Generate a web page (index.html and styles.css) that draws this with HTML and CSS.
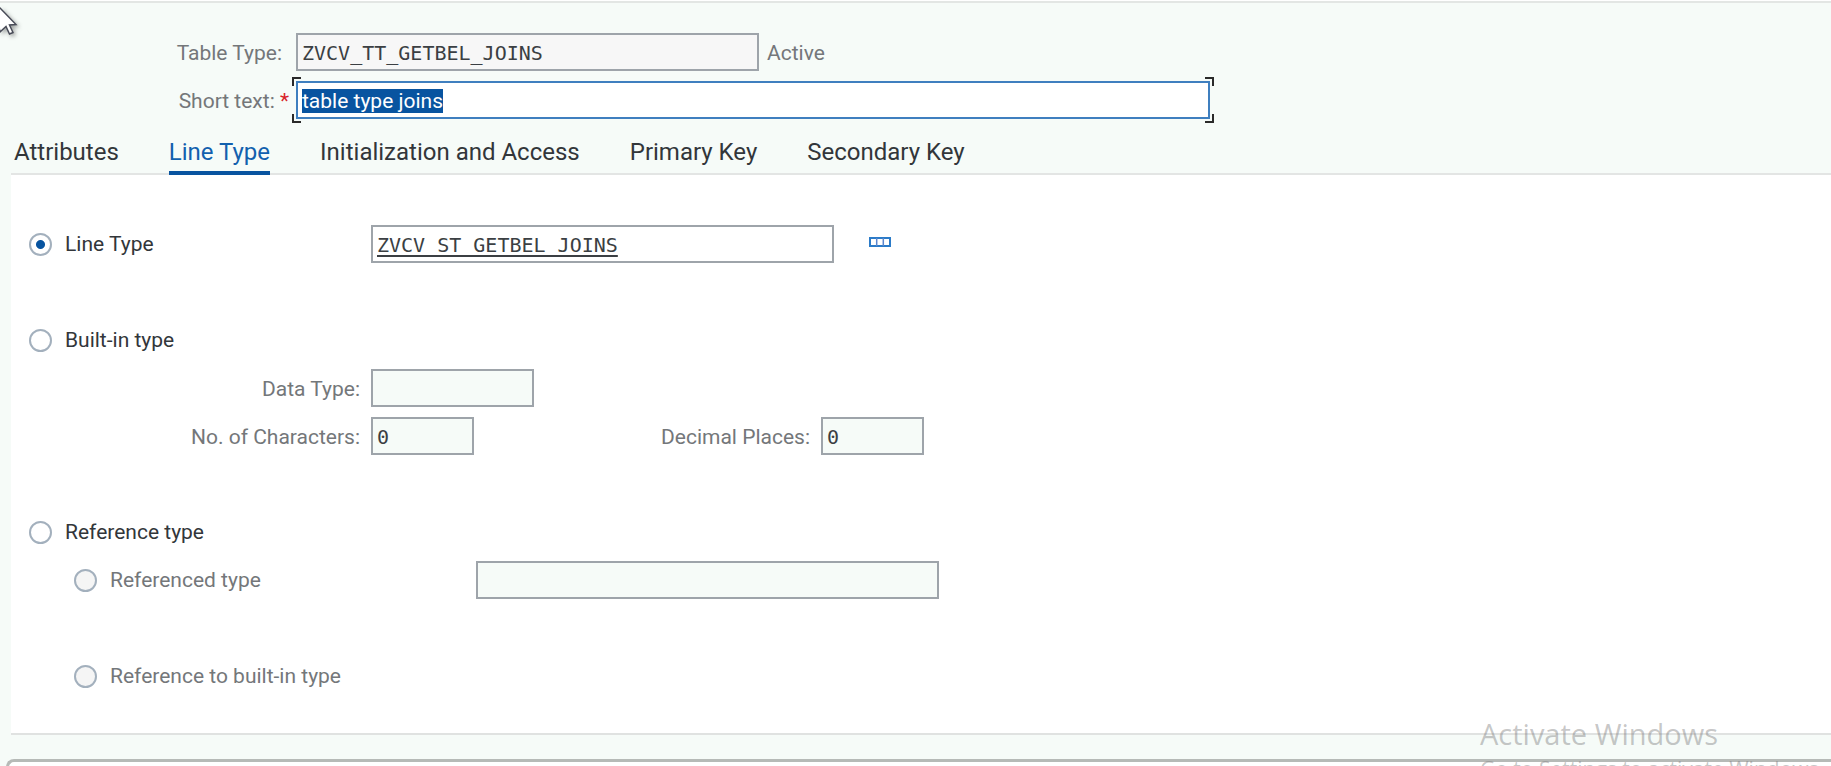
FILE: index.html
```html
<!DOCTYPE html>
<html lang="en">
<head>
<meta charset="utf-8">
<title>Table Type</title>
<link rel="stylesheet" href="styles.css">
</head>
<body>
<main class="page">
  <form class="header">
    <div class="header-row">
      <label class="label header-label" for="table-type">Table Type:</label>
      <input class="field field-long field-readonly" id="table-type" type="text" value="ZVCV_TT_GETBEL_JOINS" readonly>
      <span class="status">Active</span>
    </div>
    <div class="header-row">
      <label class="label header-label" for="short-text">Short text: <span class="required">*</span></label>
      <div class="focus-frame">
        <input class="field field-focus" id="short-text" type="text" value="table type joins" required>
        <i class="corner corner-tl"></i><i class="corner corner-tr"></i><i class="corner corner-bl"></i><i class="corner corner-br"></i>
      </div>
    </div>
  </form>
  <nav class="tabs">
    <button class="tab" type="button">Attributes</button>
    <button class="tab tab-active" type="button">Line Type</button>
    <button class="tab" type="button">Initialization and Access</button>
    <button class="tab" type="button">Primary Key</button>
    <button class="tab" type="button">Secondary Key</button>
  </nav>
  <form class="panel">
    <div class="row">
      <label class="choice choice-main"><input class="radio" type="radio" name="kind" checked>Line Type</label>
      <input class="field field-long field-link" type="text" aria-label="Line type name" value="ZVCV_ST_GETBEL_JOINS">
      <button class="icon-button" type="button" aria-label="Structure">
        <svg width="22" height="10" viewBox="0 0 22 10" fill="none" stroke="#2b7bc8" stroke-width="2"><path d="M1 1h20v8H1z"/><path stroke-width="1.5" stroke="#5a86cf" d="M7.7 1v8M14.3 1v8"/></svg>
      </button>
    </div>
    <div class="row row-spaced">
      <label class="choice"><input class="radio" type="radio" name="kind">Built-in type</label>
    </div>
    <div class="row">
      <label class="label detail-label" for="data-type">Data Type:</label>
      <input class="field field-medium field-off" id="data-type" type="text" readonly>
    </div>
    <div class="row">
      <label class="label detail-label" for="chars">No. of Characters:</label>
      <input class="field field-short field-off" id="chars" type="text" value="0" readonly>
      <label class="label decimal-label" for="decimals">Decimal Places:</label>
      <input class="field field-short field-off" id="decimals" type="text" value="0" readonly>
    </div>
    <div class="row row-spaced">
      <label class="choice"><input class="radio" type="radio" name="kind">Reference type</label>
    </div>
    <div class="row row-nested">
      <label class="choice choice-nested"><input class="radio radio-off" type="radio" name="ref" disabled>Referenced type</label>
      <input class="field field-long field-off" type="text" aria-label="Referenced type name" readonly>
    </div>
    <div class="row row-nested row-spaced">
      <label class="choice choice-nested"><input class="radio radio-off" type="radio" name="ref" disabled>Reference to built-in type</label>
    </div>
  </form>
  <section class="message-bar"></section>
  <aside class="watermark">
    <div class="watermark-title">Activate Windows</div>
    <div class="watermark-text">Go to Settings to activate Windows.</div>
  </aside>
  <svg class="cursor" width="24" height="32" viewBox="0 0 24 32"><path d="M-5 1L0 1L16 17.500L9.500 18L13 25.500L9.500 27L6 19.500L0 25z" fill="#fff" stroke="#484b57" stroke-width="1.500"/></svg>
</main>
<script src="script.js"></script>
</body>
</html>
```
FILE: styles.css
```css
* { box-sizing: border-box; }

body {
  margin: 0;
  background: #f6fbf8;
  color: #32363a;
  font-family: Roboto, Inter, sans-serif;
  font-size: 21px;
}

.page {
  position: relative;
  display: flex;
  flex-direction: column;
  height: 100vh;
  overflow: hidden;
  border-top: 1px solid #fff;
}

.header {
  border-top: 2px solid #e3e6e4;
  padding-top: 25px;
}

.header-row,
.row {
  display: flex;
  align-items: center;
  height: 48px;
}

.label { padding-top: 2px; color: #74777a; text-align: right; white-space: nowrap; }
.header-label { width: 296px; padding-right: 14px; }
.header-label:has(.required) { padding-right: 7px; }
.required { color: #d8232a; }
.status { padding: 2px 0 0 8px; color: #74777a; }

.field {
  height: 38px;
  padding: 2px 4px 0;
  border: 2px solid #9ea4aa;
  border-radius: 0;
  outline: 0;
  background: #fff;
  color: #3b3f43;
  font-family: "DejaVu Sans Mono", monospace;
  font-size: 20px;
}

.field-long { width: 463px; }
.field-medium { width: 163px; }
.field-short { width: 103px; }
.field-readonly { background: #f7f7f7; }
.field-off { background: #f6fbf8; }
.field-link {
  text-decoration: underline;
  text-decoration-skip-ink: none;
  text-underline-offset: 3px;
}

.focus-frame { position: relative; width: 914px; }
.field-focus {
  display: block;
  width: 100%;
  border-color: #3f7fbf;
  font-family: inherit;
  font-size: 21px;
}
.field-focus::selection { background: #0854a0; color: #fff; }

.corner {
  position: absolute;
  width: 9px;
  height: 9px;
  border: 0 solid #2a2a2a;
}
.corner-tl { top: -4px; left: -4px; border-width: 2px 0 0 2px; }
.corner-tr { top: -4px; right: -4px; border-width: 2px 2px 0 0; }
.corner-bl { bottom: -4px; left: -4px; border-width: 0 0 2px 2px; }
.corner-br { bottom: -4px; right: -4px; border-width: 0 2px 2px 0; }

.tabs {
  display: flex;
  gap: 50px;
  height: 51px;
  margin-left: 11px;
  padding-left: 3px;
  border-bottom: 2px solid #e3e5e4;
}

.tab {
  height: 51px;
  padding: 8px 0 0;
  border: 0;
  border-bottom: 4px solid transparent;
  background: none;
  color: #32363a;
  font-family: inherit;
  font-size: 24px;
  white-space: nowrap;
}
.tab-active { border-color: #0854a0; color: #1260ae; }

.panel {
  margin-left: 11px;
  padding: 45px 0 33px 18px;
  border-bottom: 2px solid #e0e2e1;
  background: #fff;
}

.row-spaced { margin-top: 48px; }
.row-nested { padding-left: 45px; }

.choice {
  display: flex;
  align-items: center;
  gap: 13px;
  white-space: nowrap;
}
.choice-main { width: 342px; }
.choice-nested { width: 402px; color: #74777a; }

.radio {
  appearance: none;
  width: 23px;
  height: 23px;
  margin: 0;
  border: 2px solid #a3b0bd;
  border-radius: 50%;
  background: #fff;
}
.radio:checked { background: radial-gradient(circle, #0854a0 4px, #fff 5px); }
.radio-off { background: #f5f5f5; }

.icon-button {
  display: flex;
  margin-left: 35px;
  padding: 0 0 4px;
  border: 0;
  background: none;
}

.detail-label { width: 342px; padding-right: 11px; }
.decimal-label { width: 347px; padding-right: 11px; }

.message-bar {
  flex: 1 0 40px;
  margin: 24px 0 0 6px;
  border: 3px solid #b6bab7;
  border-width: 3px 0 0 3px;
  border-radius: 8px 0 0 0;
  background: #fff;
}

.watermark {
  position: absolute;
  top: 714px;
  left: 1480px;
  color: rgba(120, 120, 120, 0.42);
  font-family: "Open Sans", "Noto Sans", sans-serif;
  white-space: nowrap;
}
.watermark-title { font-size: 29px; line-height: 38px; }
.watermark-text { font-size: 21px; line-height: 32px; }

.cursor {
  position: absolute;
  top: 6px;
  left: 0;
  filter: drop-shadow(2px 2px 2px rgba(0, 0, 0, 0.35));
}
```
FILE: script.js
```js
const shortText = document.getElementById("short-text");
shortText.focus();
shortText.select();
```
